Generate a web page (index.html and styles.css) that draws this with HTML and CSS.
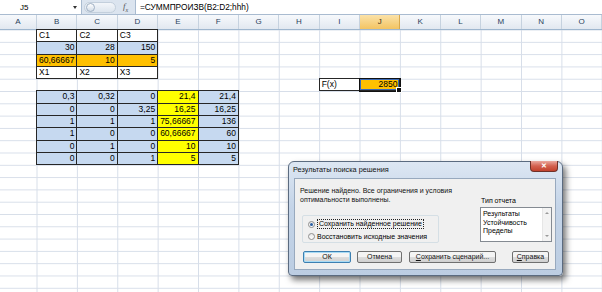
FILE: index.html
```html
<!DOCTYPE html>
<html lang="ru">
<head>
    <meta charset="UTF-8">
    <title>Поиск решения</title>
    <link rel="stylesheet" href="styles.css">
</head>
<body>
    <div class="formula-bar">
        <div class="name-box">
            <span class="name">J5</span>
            <span class="name-arrow"></span>
        </div>
        <div class="fx-area">
            <span class="pill"><span class="pill-knob"></span></span>
            <span class="fx">f<sub>x</sub></span>
        </div>
        <div class="formula">=СУММПРОИЗВ(B2:D2;hhh)</div>
    </div>

    <div class="col-headers">
        <div class="ch">A</div>
        <div class="ch">B</div>
        <div class="ch">C</div>
        <div class="ch">D</div>
        <div class="ch">E</div>
        <div class="ch">F</div>
        <div class="ch">G</div>
        <div class="ch">H</div>
        <div class="ch">I</div>
        <div class="ch active">J</div>
        <div class="ch">K</div>
        <div class="ch">L</div>
        <div class="ch">M</div>
        <div class="ch">N</div>
        <div class="ch">O</div>
    </div>

    <div class="cells">
        <!-- B1:D4 -->
        <div class="block block-vars">
            <div class="cell">C1</div>
            <div class="cell">C2</div>
            <div class="cell">C3</div>
            <div class="cell blue num">30</div>
            <div class="cell blue num">28</div>
            <div class="cell blue num">150</div>
            <div class="cell orange num">60,66667</div>
            <div class="cell orange num">10</div>
            <div class="cell orange num">5</div>
            <div class="cell">X1</div>
            <div class="cell">X2</div>
            <div class="cell">X3</div>
        </div>

        <!-- I5:J5 -->
        <div class="block block-target">
            <div class="cell">F(x)</div>
            <div class="cell orange num selected">2850</div>
        </div>

        <!-- B6:F11 -->
        <div class="block block-limits">
            <div class="cell blue num">0,3</div>
            <div class="cell blue num">0,32</div>
            <div class="cell blue num">0</div>
            <div class="cell yellow num">21,4</div>
            <div class="cell blue num">21,4</div>

            <div class="cell blue num">0</div>
            <div class="cell blue num">0</div>
            <div class="cell blue num">3,25</div>
            <div class="cell yellow num">16,25</div>
            <div class="cell blue num">16,25</div>

            <div class="cell blue num">1</div>
            <div class="cell blue num">1</div>
            <div class="cell blue num">1</div>
            <div class="cell yellow num">75,66667</div>
            <div class="cell blue num">136</div>

            <div class="cell blue num">1</div>
            <div class="cell blue num">0</div>
            <div class="cell blue num">0</div>
            <div class="cell yellow num">60,66667</div>
            <div class="cell blue num">60</div>

            <div class="cell blue num">0</div>
            <div class="cell blue num">1</div>
            <div class="cell blue num">0</div>
            <div class="cell yellow num">10</div>
            <div class="cell blue num">10</div>

            <div class="cell blue num">0</div>
            <div class="cell blue num">0</div>
            <div class="cell blue num">1</div>
            <div class="cell yellow num">5</div>
            <div class="cell blue num">5</div>
        </div>
    </div>

    <div class="dialog">
        <div class="dialog-title">
            <span>Результаты поиска решения</span>
            <span class="close-btn">✕</span>
        </div>
        <div class="dialog-body">
            <div class="dialog-top">
                <div class="dialog-left">
                    <p class="message">Решение найдено. Все ограничения и условия<br>оптимальности выполнены.</p>
                    <div class="group-box">
                        <label class="radio-row">
                            <span class="radio checked"></span>
                            <span class="focus-text">Сохранить найденное решение</span>
                        </label>
                        <label class="radio-row">
                            <span class="radio"></span>
                            <span>Восстановить исходные значения</span>
                        </label>
                    </div>
                </div>
                <div class="dialog-right">
                    <div class="list-label">Тип отчета</div>
                    <div class="listbox">
                        <div class="list-items">
                            <div>Результаты</div>
                            <div>Устойчивость</div>
                            <div>Пределы</div>
                        </div>
                        <div class="list-scroll">
                            <span class="arrow-up"></span>
                            <span class="arrow-down"></span>
                        </div>
                    </div>
                </div>
            </div>
            <div class="dialog-buttons">
                <button class="btn btn-ok default">ОК</button>
                <button class="btn btn-cancel">Отмена</button>
                <button class="btn btn-scenario"><u>С</u>охранить сценарий...</button>
                <button class="btn btn-help"><u>С</u>правка</button>
            </div>
        </div>
    </div>
</body>
</html>
```

FILE: styles.css
```css
* {
    margin: 0;
    padding: 0;
    box-sizing: border-box;
}

body {
    font-family: "Liberation Sans", Arial, sans-serif;
    background: #fff;
    width: 602px;
    height: 292px;
    overflow: hidden;
    position: relative;
    color: #000;
}

/* ---------- formula bar ---------- */

.formula-bar {
    display: flex;
    height: 15px;
    background: #dbe4ef;
    border-bottom: 1px solid #a9bbd0;
}

.name-box {
    width: 82px;
    background: #fff;
    border-right: 1px solid #a9bbd0;
    display: flex;
    align-items: center;
    position: relative;
}

.name {
    font-size: 8px;
    margin-left: 20px;
}

.name-arrow {
    position: absolute;
    left: 73px;
    top: 6px;
    border-left: 2.5px solid transparent;
    border-right: 2.5px solid transparent;
    border-top: 3px solid #333;
}

.fx-area {
    width: 53px;
    display: flex;
    align-items: center;
    padding-left: 2px;
}

.pill {
    width: 32px;
    height: 11px;
    border-radius: 6px;
    border: 1px solid #c3cfdc;
    background: linear-gradient(#f3f6fa, #dde5ee);
    display: flex;
    align-items: center;
    padding-left: 1px;
}

.pill-knob {
    width: 9px;
    height: 9px;
    border-radius: 50%;
    border: 1px solid #9fb0c4;
    background: linear-gradient(#ffffff, #d3dce7);
}

.fx {
    font-family: "Liberation Serif", serif;
    font-style: italic;
    font-size: 9px;
    color: #555;
    margin-left: 7px;
}

.fx sub {
    font-size: 6px;
}

.formula {
    flex: 1;
    background: #fff;
    border-left: 1px solid #a9bbd0;
    font-size: 8.3px;
    line-height: 14px;
    padding-left: 4px;
}

/* ---------- column headers ---------- */

.col-headers {
    display: grid;
    grid-template-columns: 37px repeat(14, 40.38px);
    height: 15px;
    border-bottom: 1px solid #9eb6ce;
}

.ch {
    background: linear-gradient(#f7f9fc, #e2e8f0);
    border-right: 1px solid #c6d2df;
    font-size: 8px;
    color: #2a3f5c;
    text-align: center;
    line-height: 14px;
}

.ch.active {
    background: linear-gradient(#fbe2a8, #f3c462);
    border-right-color: #d9a94c;
    color: #3d3012;
}

/* ---------- sheet cells ---------- */

.cells {
    display: grid;
    grid-template-columns: 37px repeat(14, 40.38px);
    grid-template-rows: repeat(22, 12.3px);
    height: 262px;
    background-image:
        linear-gradient(to right, transparent calc(100% - 1px), #d7dee9 calc(100% - 1px)),
        linear-gradient(to bottom, transparent calc(100% - 1px), #d7dee9 calc(100% - 1px));
    background-size: 40.38px 100%, 100% 12.3px;
    background-position: 37.5px 0, 0 0.5px;
}

.block {
    display: grid;
    border-top: 1px solid #262626;
    border-left: 1px solid #262626;
    margin-top: -1px;
    margin-left: -1px;
}

.block-vars {
    grid-column: 2 / 5;
    grid-row: 1 / 5;
    grid-template-columns: repeat(3, 1fr);
}

.block-target {
    grid-column: 9 / 11;
    grid-row: 5 / 6;
    grid-template-columns: repeat(2, 1fr);
}

.block-limits {
    grid-column: 2 / 7;
    grid-row: 6 / 12;
    grid-template-columns: repeat(5, 1fr);
}

.cell {
    border-right: 1px solid #262626;
    border-bottom: 1px solid #262626;
    font-size: 8.5px;
    line-height: 11px;
    padding: 0 2px;
    white-space: nowrap;
    overflow: hidden;
    background: #fff;
}

.num { text-align: right; }
.blue { background: #c6d9f0; }
.orange { background: #ffc000; }
.yellow { background: #ffff00; }

.selected {
    position: relative;
    overflow: visible;
    box-shadow: inset 0 0 0 1px #3a69b5;
    outline: 1px solid #111;
}

.selected::after {
    content: "";
    position: absolute;
    right: -3px;
    bottom: -3px;
    width: 4px;
    height: 4px;
    background: #111;
    border: 1px solid #fff;
}

/* ---------- solver dialog ---------- */

.dialog {
    position: absolute;
    left: 288px;
    top: 161px;
    width: 275px;
    height: 115px;
    border: 1px solid #5b6b80;
    border-radius: 6px 6px 4px 4px;
    background: linear-gradient(#dde7f3, #c4d4e8 40%, #bccde2);
    box-shadow: 3px 4px 6px rgba(0, 0, 0, 0.55);
    font-size: 7px;
}

.dialog-title {
    height: 16px;
    padding-left: 4px;
    line-height: 15px;
    font-size: 7.3px;
    color: #111;
    position: relative;
}

.close-btn {
    position: absolute;
    right: 4px;
    top: -1px;
    width: 28px;
    height: 11px;
    border: 1px solid #6e3028;
    border-top: none;
    border-radius: 0 0 4px 4px;
    background: linear-gradient(#eaa89e, #d3614f 50%, #c2412c);
    color: #fff;
    font-size: 7px;
    font-weight: bold;
    line-height: 10px;
    text-align: center;
}

.dialog-body {
    margin: 0 6px 0 5px;
    height: 92px;
    background: #f0f0f0;
    border: 1px solid #98a9be;
    padding: 7px 0 0 5px;
    display: flex;
    flex-direction: column;
}

.dialog-top {
    display: flex;
    height: 58px;
}

.dialog-left {
    width: 180px;
}

.message {
    line-height: 9px;
    color: #111;
}

.group-box {
    margin: 11px 0 0 2px;
    width: 137px;
    height: 28px;
    border: 1px solid #d5dfe5;
    border-radius: 2px;
    padding: 2px 0 0 5px;
}

.radio-row {
    display: flex;
    align-items: center;
    height: 12px;
    gap: 2px;
}

.radio {
    width: 7px;
    height: 7px;
    border-radius: 50%;
    border: 1px solid #8f8f8f;
    background: linear-gradient(#e6e6e6, #fff);
    position: relative;
}

.radio.checked::after {
    content: "";
    position: absolute;
    left: 1px;
    top: 1px;
    width: 3px;
    height: 3px;
    border-radius: 50%;
    background: #2b5fa3;
}

.focus-text {
    border: 1px dotted #222;
    padding: 0 1px;
    line-height: 8px;
}

.dialog-right {
    padding-left: 0;
}

.list-label {
    margin-top: 10px;
    line-height: 9px;
    padding-left: 1px;
}

.listbox {
    margin-top: 2px;
    width: 72px;
    height: 35px;
    background: #fff;
    border: 1px solid #848a92;
    display: flex;
}

.list-items {
    flex: 1;
    padding: 2px 0 0 2px;
    line-height: 8.5px;
}

.list-scroll {
    width: 9px;
    background: #f3f3f3;
    border-left: 1px solid #e6e6e6;
    display: flex;
    flex-direction: column;
    justify-content: space-between;
    align-items: center;
    padding: 4px 0;
}

.arrow-up {
    border-left: 2px solid transparent;
    border-right: 2px solid transparent;
    border-bottom: 2px solid #9a9a9a;
}

.arrow-down {
    border-left: 2px solid transparent;
    border-right: 2px solid transparent;
    border-top: 2px solid #9a9a9a;
}

.dialog-buttons {
    display: flex;
    margin-top: 7px;
    padding-left: 3px;
}

.btn {
    font-family: "Liberation Sans", Arial, sans-serif;
    font-size: 7px;
    height: 12px;
    border: 1px solid #707070;
    border-radius: 2px;
    background: linear-gradient(#f4f4f4 45%, #dedede 50%, #d0d0d0);
    color: #111;
    line-height: 10px;
}

.btn u {
    text-decoration: underline;
}

.btn.default {
    border-color: #3c7fb1;
    box-shadow: inset 0 0 0 1px #a8dbf5;
}

.btn-ok { width: 48px; }
.btn-cancel { width: 45px; margin-left: 6px; }
.btn-scenario { width: 87px; margin-left: 7px; }
.btn-help { width: 37px; margin-left: 16px; }
```
